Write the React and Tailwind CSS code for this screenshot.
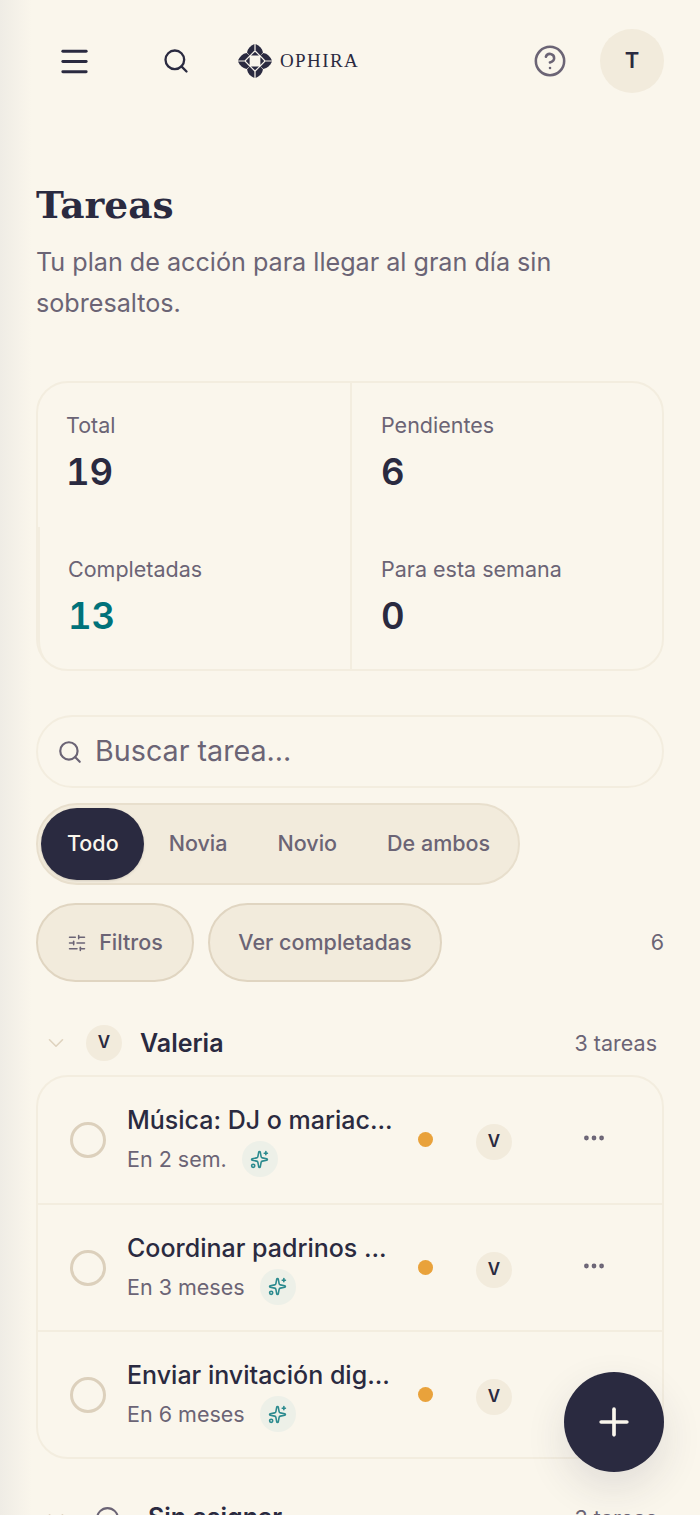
import React from "react";
import { Menu, Search, CircleHelp, ChevronDown, SlidersHorizontal, Ellipsis, Sparkles, Plus, Circle } from "lucide-react";

const stats = [
  { label: "Total", value: "19" },
  { label: "Pendientes", value: "6" },
  { label: "Completadas", value: "13", accent: true },
  { label: "Para esta semana", value: "0" },
];

const tasks = [
  { title: "Música: DJ o mariac...", when: "En 2 sem." },
  { title: "Coordinar padrinos ...", when: "En 3 meses" },
  { title: "Enviar invitación dig...", when: "En 6 meses" },
];

const tabs = ["Todo", "Novia", "Novio", "De ambos"];

// flower mark of the brand
const Logo = () => (
  <svg width="36" height="36" viewBox="0 0 36 36" fill="#2a2a40">
    {[0, 90, 180, 270].map((r) => (
      <g key={r} transform={`rotate(${r} 18 18)`}>
        <path d="M17.4 1 C13.5 2.8 10.6 5.6 10 9.6 L12.6 12.4 L17.4 7.6 Z" />
        <path d="M18.6 1 C22.5 2.8 25.4 5.6 26 9.6 L23.4 12.4 L18.6 7.6 Z" />
        <path d="M14 12.6 L18 8.8 L22 12.6 Z" />
      </g>
    ))}
  </svg>
);

const Avatar = ({ letter }) => (
  <div className="flex h-9 w-9 shrink-0 items-center justify-center rounded-full bg-[#f2ebdc] text-[17px] font-semibold text-[#2a2a40]">
    {letter}
  </div>
);

const TaskRow = ({ task, last }) => (
  <div className={`flex h-[127.5px] items-start pl-[32px] ${last ? "" : "border-b-2 border-[#f3eddf]"}`}>
    <div className="mt-[45px] h-9 w-9 shrink-0 rounded-full border-[3.5px] border-[#dcd0bc]" />
    <div className="ml-[21px] mt-[25px] w-[268px] min-w-0">
      <div className="whitespace-nowrap text-[25px] font-medium leading-[36px] text-[#2a2a40]">{task.title}</div>
      <div className="mt-[3px] flex items-center gap-[15px] text-[21.5px] leading-[36px] text-[#6b6475]">
        <span>{task.when}</span>
        <span className="flex h-9 w-9 items-center justify-center rounded-full bg-[#edf0e8]">
          <Sparkles size={19} strokeWidth={2} className="text-[#2b8a8e]" />
        </span>
      </div>
    </div>
    <div className="ml-[23px] mt-[55px] h-[15px] w-[15px] shrink-0 rounded-full bg-[#e9a23b]" />
    <div className="ml-[43px] mt-[47px]">
      <Avatar letter="V" />
    </div>
    <Ellipsis size={26} className="ml-[69px] mt-[48px] shrink-0 text-[#6b6475]" strokeWidth={2.4} />
  </div>
);

export default function App() {
  return (
    <div className="relative h-[1515px] w-[700px] overflow-hidden bg-[#faf6ec] font-['Inter',sans-serif]">
      <div className="pointer-events-none absolute inset-y-0 left-0 w-8 bg-gradient-to-r from-[#efece5] to-transparent" />

      {/* HEADER */}
      <header className="relative flex h-[122px] items-center px-9">
        <Menu size={35} strokeWidth={2} className="ml-[21px] text-[#2a2a40]" />
        <Search size={28} strokeWidth={2} className="ml-[70px] text-[#2a2a40]" />
        <div className="ml-[47px] flex items-center gap-[7px]">
          <Logo />
          <span className="font-['Liberation_Serif',serif] text-[19px] font-medium tracking-[1.4px] text-[#2a2a40]">OPHIRA</span>
        </div>
        <CircleHelp size={34} strokeWidth={1.8} className="ml-auto text-[#6b6475]" />
        <div className="ml-[33px] flex h-16 w-16 items-center justify-center rounded-full bg-[#f2ebdc] pb-[2px] text-[22px] font-semibold text-[#2a2a40]">
          T
        </div>
      </header>

      <main className="relative px-9">
        <h1 className="mt-[58px] font-['DejaVu_Serif',serif] text-[37.5px] font-bold leading-[50px] text-[#2a2a40]">Tareas</h1>
        <p className="mt-[12px] w-[600px] text-[25.15px] leading-[41px] text-[#6b6475]">
          Tu plan de acción para llegar al gran día sin sobresaltos.
        </p>

        {/* STATS */}
        <div className="mt-[57px] grid h-[290px] grid-cols-2 rounded-[32px] border-2 border-[#f3eddf]">
          {stats.map((s, i) => (
            <div
              key={s.label}
              className={`h-[144px] pt-[25px] ${i % 2 === 1 ? "border-l-2 border-[#f3eddf] pl-[29px]" : "pl-[28px]"} ${i === 2 ? "rounded-bl-[30px] border-l-2 border-[#f3eddf]" : ""}`}
            >
              <div className="text-[21.5px] leading-[34px] text-[#6b6475]">{s.label}</div>
              <div className={`mt-[3px] text-[36.5px] font-semibold leading-[54px] tabular-nums ${s.accent ? "text-[#00727a]" : "text-[#2a2a40]"}`}>{s.value}</div>
            </div>
          ))}
        </div>

        {/* SEARCH */}
        <div className="mt-[44px] flex h-[73px] items-center rounded-full border-2 border-[#f3eddf] pl-[19px]">
          <Search size={26} strokeWidth={2} className="text-[#6b6475]" />
          <span className="ml-[12px] pb-[2px] text-[28.7px] text-[#6b6475]">Buscar tarea...</span>
        </div>

        {/* TABS */}
        <div className="mt-[15px] flex h-[82px] w-[484px] items-center rounded-full border-2 border-[#e8dfcd] bg-[#f2ebdc] px-[3px]">
          {tabs.map((t, i) => (
            <div
              key={t}
              className={`flex h-[72px] items-center whitespace-nowrap rounded-full pb-[1px] pr-[25px] text-[21.5px] font-medium ${i === 0 ? "bg-[#2a2a40] pl-[26px] text-[#faf6ec] shadow-sm" : "pl-[25px] text-[#6b6475]"}`}
            >
              {t}
            </div>
          ))}
        </div>

        {/* FILTERS */}
        <div className="mt-[18px] flex items-center">
          <div className="flex h-[79px] w-[158px] items-center justify-center gap-[12px] rounded-full border-2 border-[#e0d5c1] bg-[#f2ebdc] text-[21.5px] font-medium text-[#6b6475]">
            <SlidersHorizontal size={20} strokeWidth={1.8} />
            Filtros
          </div>
          <div className="ml-[14px] flex h-[79px] w-[234px] items-center justify-center rounded-full border-2 border-[#e0d5c1] bg-[#f2ebdc] text-[21.5px] font-medium text-[#6b6475]">
            Ver completadas
          </div>
          <span className="ml-auto text-[21.5px] text-[#6b6475]">6</span>
        </div>

        {/* GROUP: VALERIA */}
        <div className="mt-[43px] flex h-9 items-center pl-[6.5px] pr-[7px]">
          <ChevronDown size={26} strokeWidth={1.5} className="text-[#dfd3bf]" />
          <div className="ml-[17.5px]">
            <Avatar letter="V" />
          </div>
          <span className="ml-[18px] pt-[1px] text-[25px] font-semibold text-[#2a2a40]">Valeria</span>
          <span className="ml-auto text-[21.5px] text-[#6b6475]">3 tareas</span>
        </div>

        <div className="mt-[14px] h-[384px] rounded-[32px] border-2 border-[#f3eddf]">
          {tasks.map((t, i) => (
            <TaskRow key={t.title} task={t} last={i === tasks.length - 1} />
          ))}
        </div>

        {/* GROUP: SIN ASIGNAR */}
        <div className="mt-[41px] flex h-9 items-center pl-[6.5px] pr-[7px]">
          <ChevronDown size={26} strokeWidth={1.5} className="text-[#dfd3bf]" />
          <Circle size={25} strokeWidth={2} className="ml-[26.5px] mt-[1px] text-[#6b6475]" />
          <span className="ml-[28px] text-[25px] font-semibold text-[#2a2a40]">Sin asignar</span>
          <span className="ml-auto text-[21.5px] text-[#6b6475]">3 tareas</span>
        </div>
      </main>

      <button className="absolute left-[564px] top-[1372px] flex h-[100px] w-[100px] items-center justify-center rounded-full bg-[#2a2a40] text-[#faf6ec] shadow-[0_16px_40px_rgba(42,42,64,0.12)]">
        <Plus size={44} strokeWidth={2} />
      </button>
    </div>
  );
}
